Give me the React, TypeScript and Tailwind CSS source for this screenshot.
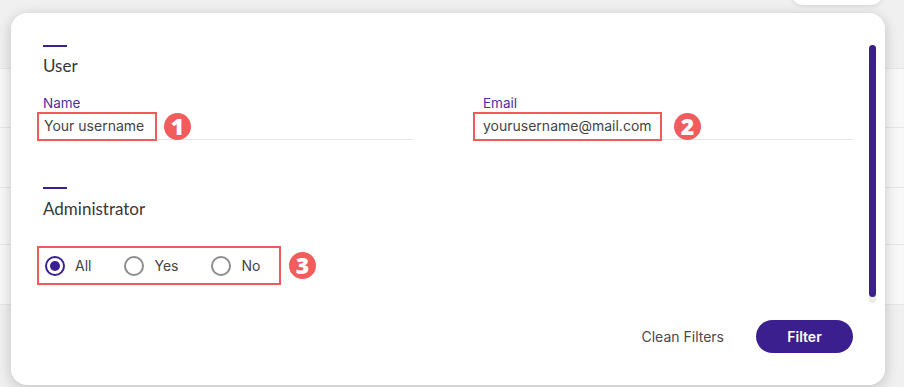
import React, { useState } from 'react'

const Badge = ({ n }: { n: number }) => (
  <span className="flex h-[27px] w-[27px] items-center justify-center rounded-full bg-[#f25c5c] text-[23px] font-black leading-none text-white [font-family:'Open_Sans',sans-serif]">
    {n}
  </span>
)

const Radio = ({ label, checked, onClick }: { label: string; checked: boolean; onClick: () => void }) => (
  <button onClick={onClick} className="flex items-center gap-[10px]">
    <span
      className={
        checked
          ? 'flex h-[20px] w-[20px] items-center justify-center rounded-full border-2 border-[#3c1f8f]'
          : 'flex h-[20px] w-[20px] items-center justify-center rounded-full border-2 border-[#8c8c8c]'
      }
    >
      {checked && <span className="h-[10px] w-[10px] rounded-full bg-[#3c1f8f]" />}
    </span>
    <span className="text-[14px] text-[#444]">{label}</span>
  </button>
)

export default function App() {
  const [admin, setAdmin] = useState('All')

  return (
    <div className="relative h-[387px] w-[904px] overflow-hidden bg-[#f0f0f0] [font-family:Inter,'Liberation_Sans',sans-serif]">
      {/* Background table behind the popover */}
      <div className="flex flex-col pt-[68px]">
        <div className="h-[60px] border-y border-[#e6e6e6] bg-[#f8f8f8]" />
        <div className="h-[60px] border-b border-[#e6e6e6] bg-[#f8f8f8]" />
        <div className="h-[57px] border-b border-[#e6e6e6] bg-[#f8f8f8]" />
        <div className="h-[60px] border-b border-[#e6e6e6] bg-[#f8f8f8]" />
      </div>
      <div className="absolute left-[792px] top-[-10px] h-[15px] w-[90px] rounded-b-[10px] bg-white shadow-[0_1px_4px_rgba(0,0,0,0.12)]" />

      {/* Filter popover */}
      <div className="absolute left-[11px] top-[13px] flex h-[372px] w-[874px] flex-col rounded-[16px] bg-white px-8 pb-8 pt-8 shadow-[0_3px_14px_rgba(0,0,0,0.2)]">
        {/* scrollbar */}
        <div className="absolute right-[9px] top-[32px] h-[258px] w-[7px] rounded-full bg-[#ececec]">
          <div className="h-[252px] w-[7px] rounded-full bg-[#3c1f8f]" />
        </div>

        <div className="h-[2px] w-[24px] bg-[#3c1f8f]" />
        <h3 className="mt-[7px] text-[17px] leading-[24px] text-[#383838] [font-family:Lato,sans-serif]">User</h3>

        <div className="mt-[16px] grid grid-cols-[370px_380px] gap-x-[60px]">
          <div className="relative">
            <label className="block text-[13.5px] leading-[18px] text-[#4a2fa5]">Name</label>
            <div className="flex h-[28px] items-center border-b border-[#e4e4e4] text-[14px] text-[#444]">
              <span className="pl-[1px]">Your username</span>
            </div>
            <div className="absolute left-[-6px] top-[18px] h-[29px] w-[120px] border-2 border-[#f05a5a]" />
            <div className="absolute left-[121px] top-[19px]">
              <Badge n={1} />
            </div>
          </div>
          <div className="relative">
            <label className="block pl-[10px] text-[13.5px] leading-[18px] text-[#4a2fa5]">Email</label>
            <div className="flex h-[28px] items-center border-b border-[#e4e4e4] text-[14px] text-[#444]">
              <span className="pl-[10px]">yourusername@mail.com</span>
            </div>
            <div className="absolute left-0 top-[18px] h-[29px] w-[189px] border-2 border-[#f05a5a]" />
            <div className="absolute left-[201px] top-[19px]">
              <Badge n={2} />
            </div>
          </div>
        </div>

        <div className="mt-[47px] h-[2px] w-[24px] bg-[#3c1f8f]" />
        <h3 className="mt-[8px] text-[17px] leading-[24px] text-[#383838] [font-family:Lato,sans-serif]">Administrator</h3>

        <div className="mt-[25px] flex items-center gap-[8px]">
          <div className="ml-[-6px] flex h-[39px] w-[244px] items-center gap-[33px] border-2 border-[#f05a5a] pl-[6px]">
            <Radio label="All" checked={admin === 'All'} onClick={() => setAdmin('All')} />
            <Radio label="Yes" checked={admin === 'Yes'} onClick={() => setAdmin('Yes')} />
            <Radio label="No" checked={admin === 'No'} onClick={() => setAdmin('No')} />
          </div>
          <Badge n={3} />
        </div>

        <div className="mt-auto flex items-center justify-end gap-[32px]">
          <button className="text-[14px] text-[#4a4a4a]">Clean Filters</button>
          <button className="h-[33px] w-[97px] rounded-full bg-[#3c1f8f] text-[14px] font-semibold text-white">
            Filter
          </button>
        </div>
      </div>
    </div>
  )
}
